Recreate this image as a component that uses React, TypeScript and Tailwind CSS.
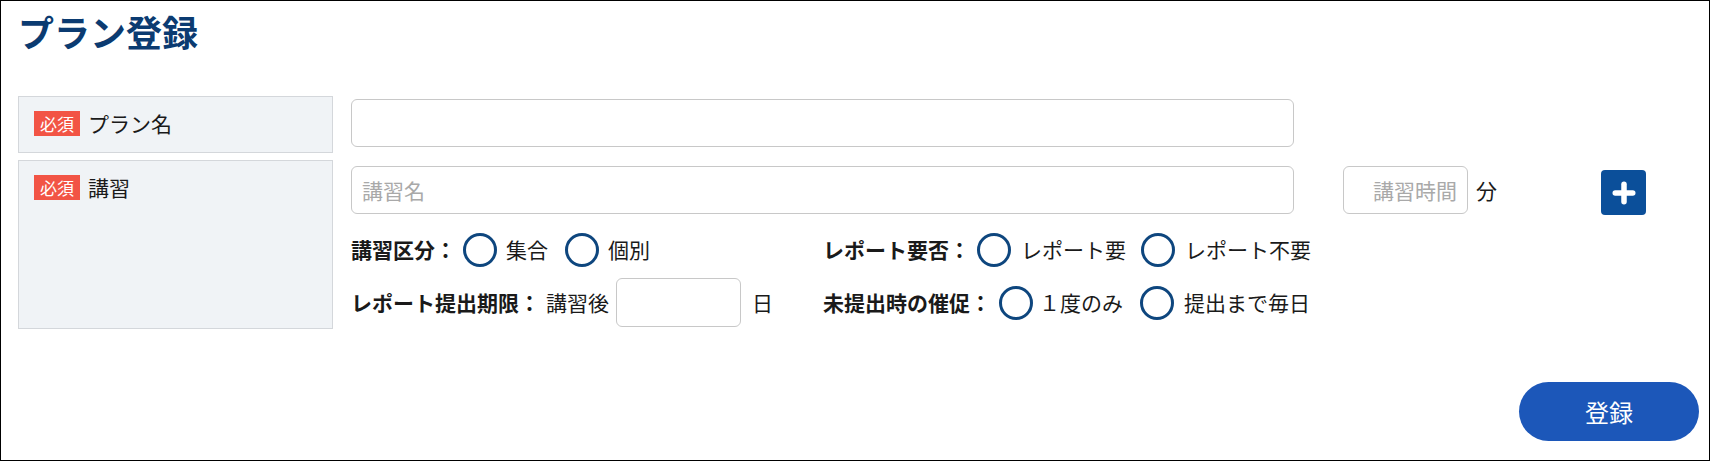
import { Plus } from "lucide-react"

const font = { fontFamily: '"Noto Sans CJK JP", "Noto Sans", sans-serif' }

const Badge = () => (
  <span className="flex h-[25px] w-[46px] shrink-0 items-center justify-center bg-[#f25445] text-[17px] leading-none text-white">
    必須
  </span>
)

const Radio = ({ label, gap = "ml-[9px]" }: { label: string; gap?: string }) => (
  <label className="flex items-center">
    <span className="block size-[34px] shrink-0 rounded-full border-[3px] border-[#0e467e] bg-white" />
    <span className={`${gap} text-[21px] leading-none text-[#1a1a1a]`}>{label}</span>
  </label>
)

const FieldLabel = ({ children }: { children: string }) => (
  <span className="text-[21px] leading-none font-bold text-[#1a1a1a]">{children}</span>
)

const LabelCell = ({ text, height }: { text: string; height: string }) => (
  <div
    className={`flex w-[315px] shrink-0 items-start gap-[8px] border border-[#d4d7db] bg-[#f0f3f6] pt-[14px] pl-[15px] ${height}`}
  >
    <Badge />
    <span className="flex h-[25px] items-center text-[21px] leading-none text-[#1a1a1a]">{text}</span>
  </div>
)

export default function App() {
  return (
    <div style={font} className="flex h-[461px] w-[1710px] flex-col border border-black bg-white">
      <h1 className="ml-[17px] pt-[10px] text-[36px] leading-[40px] font-bold text-[#0b3b71]">プラン登録</h1>

      <div className="mt-[45px] ml-[17px] flex flex-col gap-[7px]">
        {/* プラン名 */}
        <div className="flex gap-[18px]">
          <LabelCell text="プラン名" height="h-[57px]" />
          <input
            type="text"
            className="mt-[3px] h-[48px] w-[943px] rounded-[6px] border border-[#c8c8c8] bg-white px-[10px] text-[21px] outline-none"
          />
        </div>

        {/* 講習 */}
        <div className="flex gap-[18px]">
          <LabelCell text="講習" height="h-[169px]" />
          <div className="flex flex-col pt-[6px]">
            <div className="flex h-[48px] items-start">
              <input
                type="text"
                placeholder="講習名"
                className="h-[48px] w-[943px] rounded-[6px] border border-[#c8c8c8] bg-white px-[10px] text-[21px] outline-none placeholder:text-[#a9a9a9]"
              />
              <input
                type="text"
                placeholder="講習時間"
                className="ml-[49px] h-[48px] w-[125px] rounded-[6px] border border-[#c8c8c8] bg-white px-[10px] text-right text-[21px] outline-none placeholder:text-[#a9a9a9]"
              />
              <span className="ml-[8px] flex h-[48px] items-center text-[21px] leading-none text-[#1a1a1a]">分</span>
              <button
                type="button"
                className="mt-[4px] ml-[104px] flex size-[45px] items-center justify-center rounded-[4px] bg-[#0b4f9a] text-white"
              >
                <Plus size={30} strokeWidth={4.4} />
              </button>
            </div>

            <div className="mt-[18px] flex h-[35px] items-center">
              <div className="flex w-[472px] items-center gap-[7px]">
                <FieldLabel>講習区分：</FieldLabel>
                <div className="flex items-center gap-[17px]">
                  <Radio label="集合" />
                  <Radio label="個別" />
                </div>
              </div>
              <div className="flex items-center gap-[7px]">
                <FieldLabel>レポート要否：</FieldLabel>
                <div className="flex items-center gap-[15px]">
                  <Radio label="レポート要" gap="ml-[10px]" />
                  <Radio label="レポート不要" gap="ml-[10px]" />
                </div>
              </div>
            </div>

            <div className="mt-[11px] flex h-[49px] items-center">
              <div className="flex w-[472px] items-center">
                <FieldLabel>レポート提出期限：</FieldLabel>
                <span className="ml-[6px] text-[21px] leading-none text-[#1a1a1a]">講習後</span>
                <input
                  type="text"
                  className="ml-[7px] h-[49px] w-[125px] rounded-[6px] border border-[#c8c8c8] bg-white px-[10px] text-[21px] outline-none"
                />
                <span className="ml-[11px] text-[21px] leading-none text-[#1a1a1a]">日</span>
              </div>
              <div className="flex items-center gap-[8px]">
                <FieldLabel>未提出時の催促：</FieldLabel>
                <div className="flex items-center gap-[17px]">
                  <Radio label="１度のみ" gap="ml-[6px]" />
                  <Radio label="提出まで毎日" gap="ml-[10px]" />
                </div>
              </div>
            </div>
          </div>
        </div>
      </div>

      <div className="mt-[53px] flex justify-end pr-[10px]">
        <button
          type="button"
          className="flex h-[59px] w-[180px] items-center justify-center rounded-full bg-[#1c57b9] text-[24px] leading-none text-white"
        >
          登録
        </button>
      </div>
    </div>
  )
}
